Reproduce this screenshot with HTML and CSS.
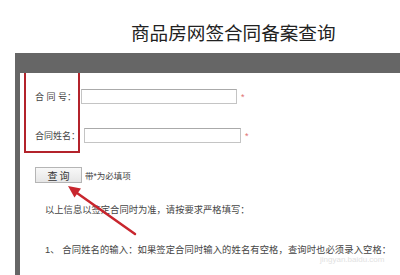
FILE: index.html
```html
<!DOCTYPE html>
<html lang="zh-CN">
<head>
    <meta charset="UTF-8">
    <meta name="viewport" content="width=device-width, initial-scale=1.0">
    <title>商品房网签合同备案查询</title>
    <link rel="stylesheet" href="styles.css">
</head>
<body>
    <h1 class="title">商品房网签合同备案查询</h1>
    <div class="panel">
        <div class="mark"></div>
        <svg class="arrow" width="380" height="186" viewBox="0 0 380 186">
            <line x1="115" y1="161" x2="57" y2="120" stroke="#c8262e" stroke-width="2.5" stroke-linecap="round"/>
            <polygon points="48,113 61,115.5 54.5,124.5" fill="#c8262e"/>
        </svg>
        <div class="row">
            <label class="label">合 同 号：</label>
            <input class="field" type="text">
            <span class="req">*</span>
        </div>
        <div class="row row-name">
            <label class="label">合同姓名：</label>
            <input class="field field-wide" type="text">
            <span class="req">*</span>
        </div>
        <div class="row row-btn">
            <button class="btn">查 询</button>
            <span class="hint">带*为必填项</span>
        </div>
        <p class="note">以上信息以签定合同时为准，请按要求严格填写：</p>
        <p class="note note-item">1、 合同姓名的输入：如果签定合同时输入的姓名有空格，查询时也必须录入空格：</p>
        <span class="wm">jingyan.baidu.com</span>
    </div>
</body>
</html>
```

FILE: styles.css
```css
body {
    margin: 0;
    background-color: #fff;
    font-family: "Liberation Sans", "Noto Sans CJK SC", sans-serif;
    color: #333;
}

.title {
    margin: 0;
    padding: 22px 0 0 131px;
    height: 31px;
    font-size: 18.6px;
    line-height: 24px;
    font-weight: normal;
    color: #222;
}

.panel {
    position: relative;
    margin-left: 15px;
    height: 186px;
    border-top: 20px solid #666;
    border-left: 5px solid #666;
    padding: 16px 0 0 15px;
    overflow: hidden;
}

.mark {
    position: absolute;
    left: 4px;
    top: -5px;
    width: 52px;
    height: 81px;
    border: 2px solid #b3232b;
}

.arrow {
    position: absolute;
    left: 0;
    top: 0;
}

.row {
    display: flex;
    align-items: center;
    height: 15px;
}

.row-name {
    margin-top: 24px;
}

.row-btn {
    margin-top: 24px;
    height: 16px;
}

.label {
    width: 46px;
    font-size: 9px;
    color: #444;
    white-space: nowrap;
}

.row-name .label {
    width: 49px;
}

.field {
    box-sizing: border-box;
    width: 156px;
    height: 15px;
    margin: 0;
    border: 1px solid #c4c4c4;
    border-top-color: #aaa;
    background-color: #fff;
}

.field-wide {
    width: 157px;
}

.req {
    margin-left: 4px;
    font-size: 9px;
    color: #e07070;
}

.btn {
    box-sizing: border-box;
    width: 47px;
    height: 16px;
    padding: 0;
    border: 1px solid #b5b5b5;
    background: linear-gradient(#f8f8f8, #e6e6e6);
    font-family: "Noto Sans CJK SC", sans-serif;
    font-size: 10px;
    color: #333;
}

.hint {
    margin-left: 3px;
    font-size: 8.5px;
    color: #444;
}

.note {
    margin: 21px 0 0 10px;
    font-size: 9.3px;
    line-height: 12px;
    color: #444;
}

.note-item {
    margin-top: 28px;
    letter-spacing: 0.1px;
}

.wm {
    position: absolute;
    left: 300px;
    top: 182px;
    font-size: 8px;
    color: #e2e2e2;
}
```
